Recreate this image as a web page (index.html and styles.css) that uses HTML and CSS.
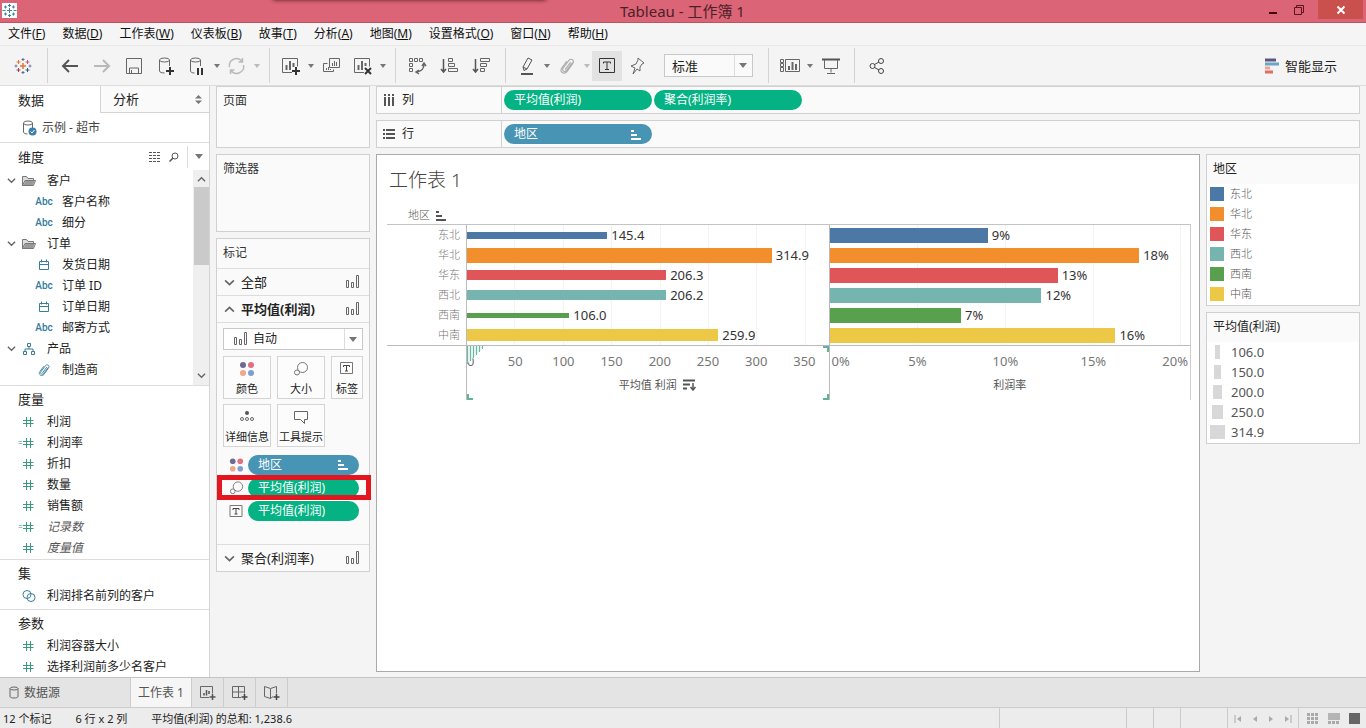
FILE: index.html
```html
<!DOCTYPE html>
<html lang="zh-CN">
<head>
<meta charset="utf-8">
<title>Tableau - 工作簿 1</title>
<link rel="stylesheet" href="styles.css">
</head>
<body>
<svg class="defs" aria-hidden="true">
  <symbol id="i-marks" viewBox="0 0 14 14"><path d="M1.500 5.500h2v7h-2zM6.500 7.500h2v5h-2zM11.500 .5h2v12h-2z" fill="none" stroke="#666"/></symbol>
  <symbol id="i-down" viewBox="0 0 10 10"><path d="M1 3l4 4 4-4" fill="none" stroke="#666" stroke-width="1.500"/></symbol>
  <symbol id="i-up" viewBox="0 0 10 10"><path d="M1 7l4-4 4 4" fill="none" stroke="#666" stroke-width="1.500"/></symbol>
  <symbol id="i-hash" viewBox="0 0 12 12"><path d="M4.500 1v10M8.500 1v10M1 4.500h10.500M1 7.500h10.500" fill="none" stroke="#3a9a80"/></symbol>
  <symbol id="i-cal" viewBox="0 0 12 12"><path d="M1.500 2.500h9v8h-9zM1.500 5.500h9M3.500 .5v3M8.500 .5v3" fill="none" stroke="#3a7d99"/></symbol>
  <symbol id="i-folder" viewBox="0 0 14 12"><path d="M.5 10.500v-9h4l1.500 2h5.500v2M.5 10.500l2.500-5h10.500l-2 5z" fill="#ddd" stroke="#777"/><path d="M1.500 10l2-4h9l-1.500 4z" fill="#999"/></symbol>
  <symbol id="i-sort" viewBox="0 0 11 11"><path d="M1 2h3M1 6h6M1 10h10" stroke="currentColor" stroke-width="2"/></symbol>
  <symbol id="i-text" viewBox="0 0 14 14"><path d="M.5 1.500h12v11h-12z" fill="none" stroke="#777"/><path d="M3.500 6V4.500h6V6M6.500 4.500v5.500M5 10h3" fill="none" stroke="#444"/></symbol>
  <symbol id="i-size" viewBox="0 0 16 16"><circle cx="9.500" cy="6.500" r="5" fill="none" stroke="#777"/><circle cx="4" cy="11.500" r="2.500" fill="#fafafa" stroke="#777"/></symbol>
  <symbol id="i-color" viewBox="0 0 16 16"><circle cx="4" cy="4" r="3" fill="#6e6a93"/><circle cx="12" cy="4" r="3" fill="#e26f81"/><circle cx="4" cy="12" r="3" fill="#f0a68a"/><circle cx="12" cy="12" r="3" fill="#7f9cd3"/></symbol>
  <symbol id="i-clip" viewBox="0 0 16 16"><path d="M12.500 5.500l-5 6.500c-1.500 2-4.500.2-3-2l5.200-7c1.800-2.200 5.300 0 3.600 2.400L8 13c-2.500 3-7 .3-4.800-3L7.500 4M11 5l-4.500 6" fill="none" stroke="currentColor" stroke-linecap="round"/></symbol>
</svg>

<header class="titlebar">
  <svg class="app" width="15" height="15" viewBox="0 0 15 15"><path fill="#fff" d="M0 0h15v15H0z"/><path d="M7.500 1v3M6 2.500h3M7.500 5v5M5 7.500h5M7.500 11v3M6 12.500h3M3.500 2.500v3M2 4h3M11.500 2.500v3M10 4h3M3.500 9.500v3M2 11h3M11.500 9.500v3M10 11h3M.5 7.500h3M11.500 7.500h3" stroke="#3c83a8"/></svg>
  <i class="shade"></i>
  <h1>Tableau - 工作簿 1</h1>
  <div class="winbtns">
    <button aria-label="最小化"><svg width="10" height="10"><path d="M1 8h8" stroke="#400" stroke-width="2"/></svg></button>
    <button aria-label="还原"><svg width="12" height="12"><path d="M3.500 3V1.500h7v7H9M1.500 3.500h7v7h-7z" fill="none" stroke="#5a1520"/></svg></button>
    <button class="close" aria-label="关闭"><svg width="10" height="10"><path d="M1.500 1.500l7 7M8.500 1.500l-7 7" stroke="#fff" stroke-width="2"/></svg></button>
  </div>
</header>

<nav class="menu">
  <button>文件(<u>F</u>)</button><button>数据(<u>D</u>)</button><button>工作表(<u>W</u>)</button><button>仪表板(<u>B</u>)</button><button>故事(<u>T</u>)</button><button>分析(<u>A</u>)</button><button>地图(<u>M</u>)</button><button>设置格式(<u>O</u>)</button><button>窗口(<u>N</u>)</button><button>帮助(<u>H</u>)</button>
</nav>

<div class="toolbar">
  <div class="group first">
    <button class="tb" aria-label="开始"><svg width="18" height="18" viewBox="0 0 18 18"><path d="M9 6v6M6 9h6" stroke="#e8762d" stroke-width="1.500"/><path d="M4.500 3v4M2.500 5h4" stroke="#e8762d"/><path d="M13.500 3v4M11.500 5h4" stroke="#c75b6d"/><path d="M4.500 11v4M2.500 13h4" stroke="#b23a50"/><path d="M13.500 11v4M11.500 13h4" stroke="#2e5d8a"/><path d="M9 1v3M7.500 2.500h3M9 14v3M7.500 15.500h3" stroke="#4a6fa0"/><path d="M2 7.500v3M.5 9h3M16 7.500v3M14.500 9h3" stroke="#7379a8"/></svg></button>
  </div>
  <div class="group">
    <button class="tb" aria-label="撤消"><svg width="20" height="20"><path d="M18 10H3M9 4l-6 6 6 6" fill="none" stroke="#555" stroke-width="2"/></svg></button>
    <button class="tb" aria-label="重做"><svg width="20" height="20"><path d="M2 10h15M11 4l6 6-6 6" fill="none" stroke="#b8b8b8" stroke-width="2"/></svg></button>
    <button class="tb" aria-label="保存"><svg width="20" height="20"><path d="M2.500 2.500h15v15h-15zM5.500 17v-5h9v5M7.500 14v3" fill="none" stroke="#666"/></svg></button>
    <button class="tb" aria-label="新建数据源"><svg width="20" height="20"><ellipse cx="8.500" cy="4" rx="5" ry="2" fill="none" stroke="#666"/><path d="M3.500 4v11c0 1 2 2 5 2M13.500 4v6" fill="none" stroke="#666"/><path d="M14 11v8M10 15h8" stroke="#333" stroke-width="2"/></svg></button>
    <button class="tb pair" aria-label="暂停更新"><svg width="20" height="20"><ellipse cx="8.500" cy="4" rx="5" ry="2" fill="none" stroke="#666"/><path d="M3.500 4v11c0 1 1.500 2 4 2M13.500 4v6" fill="none" stroke="#666"/><path d="M11 12v7M15 12v7" stroke="#333" stroke-width="2"/></svg></button><i class="caret"></i>
    <button class="tb pair" aria-label="刷新"><svg width="20" height="20"><path d="M2.500 11A7 7 0 0 1 15 5.500M16.500 9A7 7 0 0 1 4 14.500M15.500 2v4h-4M3.500 18v-4h4" fill="none" stroke="#bbb" stroke-width="1.500"/></svg></button><i class="caret dim"></i>
  </div>
  <div class="group">
    <button class="tb pair" aria-label="新建工作表"><svg width="20" height="20"><path d="M11 16.500H1.500v-14h15v8" fill="none" stroke="#666"/><path d="M5.500 14V9M9 14V5M12.500 11V7" stroke="#666" stroke-width="2"/><path d="M15 11v8M11 15h8" stroke="#333" stroke-width="2"/></svg></button><i class="caret"></i>
    <button class="tb" aria-label="复制"><svg width="20" height="20"><path d="M7.500 2.500h10v9h-10zM5.500 7.500h-4v8h10v-2" fill="none" stroke="#666"/><path d="M10.500 10V7M12.500 10V5M14.500 10V6M4.500 14v-2M6.500 14v-3M8.500 14v-1" stroke="#666"/></svg></button>
    <button class="tb pair" aria-label="清除"><svg width="20" height="20"><path d="M11 16.500H1.500v-14h15v8" fill="none" stroke="#666"/><path d="M5.500 14V9M9 14V5M12.500 10V7" stroke="#666" stroke-width="2"/><path d="M12 12l6 6M18 12l-6 6" stroke="#333" stroke-width="2"/></svg></button><i class="caret"></i>
  </div>
  <div class="group">
    <button class="tb" aria-label="交换行和列"><svg width="20" height="20"><path d="M1.500 2.500h3v3h-3zM6.500 2.500h3v3h-3zM11.500 2.500h3v3h-3zM1.500 7.500h3v3h-3zM1.500 12.500h3v3h-3z" fill="none" stroke="#666"/><path d="M16 8c0 5-2 7-7 8M14 10l2-3 2 3M11 14l-3 2 3 2" fill="none" stroke="#666" stroke-width="1.500"/></svg></button>
    <button class="tb" aria-label="升序"><svg width="20" height="20"><path d="M3.500 3v13M1 13l2.500 3 2.500-3" fill="none" stroke="#555" stroke-width="1.500"/><path d="M8.500 2.500h4v3h-4zM8.500 7.500h6v3h-6zM8.500 12.500h9v3h-9z" fill="none" stroke="#666"/></svg></button>
    <button class="tb" aria-label="降序"><svg width="20" height="20"><path d="M3.500 3v13M1 13l2.500 3 2.500-3" fill="none" stroke="#555" stroke-width="1.500"/><path d="M8.500 2.500h9v3h-9zM8.500 7.500h6v3h-6zM8.500 12.500h4v3h-4z" fill="none" stroke="#666"/></svg></button>
  </div>
  <div class="group">
    <button class="tb pair" aria-label="突出显示"><svg width="20" height="20"><path d="M6 11l5-9 4 2-5 9-3 1.500zM6 11l4 2" fill="none" stroke="#555"/><path d="M4 18h12" stroke="#555" stroke-width="2"/></svg></button><i class="caret"></i>
    <button class="tb pair clip" aria-label="组"><svg width="18" height="18"><use href="#i-clip"/></svg></button><i class="caret dim"></i>
    <button class="tb pair on" aria-label="显示标记标签"><svg width="20" height="20"><path d="M2.500 2.500h15v14h-15z" fill="none" stroke="#333"/><path d="M6.500 7.500V6h7v1.500M10 6v7M8 13.500h4" fill="none" stroke="#333"/></svg></button>
    <button class="tb pair" aria-label="固定"><svg width="20" height="20"><path d="M11 2l6 5-2 1-2 3v4l-3-2-4 5 2-6-4-2 5-2 2-4z" fill="none" stroke="#666"/></svg></button>
    <label class="sel fit"><select aria-label="适合"><option>标准</option></select></label>
  </div>
  <div class="group">
    <button class="tb pair" aria-label="显示卡"><svg width="22" height="20"><path d="M1.500 3.500h3v3h-3zM1.500 7.500h3v3h-3zM1.500 11.500h3v4h-3zM6.500 3.500h14v12h-14z" fill="none" stroke="#666"/><path d="M10 14v-4M13.500 14V6M17 14V8" stroke="#666" stroke-width="2"/></svg></button><i class="caret"></i>
    <button class="tb" aria-label="演示"><svg width="20" height="20"><path d="M1 3.500h18" stroke="#555" stroke-width="2"/><path d="M3.500 4v8.500h13V4M10 12.500v4M6 17.500h8" fill="none" stroke="#666"/></svg></button>
  </div>
  <div class="group last"><button class="tb" aria-label="共享"><svg width="20" height="20"><g fill="none" stroke="#444"><circle cx="5.500" cy="10" r="2.500"/><circle cx="14" cy="5" r="2.500"/><circle cx="14" cy="15" r="2.500"/><path d="M7.500 8.500L12 6M7.500 11.500L12 14"/></g></svg></button></div>
  <button class="showme"><svg width="14" height="16"><path d="M0 2h11" stroke="#5f5680" stroke-width="3"/><path d="M0 6h14" stroke="#6aa5c4" stroke-width="3"/><path d="M0 10h5" stroke="#f0a590" stroke-width="3"/><path d="M0 14h8" stroke="#dc6f62" stroke-width="3"/></svg>智能显示</button>
</div>

<main>
  <aside class="data">
    <div class="tabs"><button class="act">数据</button><button>分析<svg width="7" height="9"><path d="M3.500 0L7 3.500H0zM3.500 9L7 5.500H0z" fill="#777"/></svg></button></div>
    <div class="source"><svg width="15" height="16"><ellipse cx="6" cy="3" rx="4.500" ry="2" fill="none" stroke="#666"/><path d="M1.500 3v9c0 1 1.500 2 4 2M10.500 3v5" fill="none" stroke="#666"/><circle cx="10.500" cy="11.500" r="4" fill="#3d7fa8"/><path d="M8.500 11.500l1.500 1.500 2.500-3" fill="none" stroke="#fff"/></svg>示例 - 超市</div>
    <section class="dims">
      <h2>维度
        <span class="tools"><button aria-label="列表"><svg width="12" height="10"><path d="M0 .5h12M0 3.500h12M0 6.500h12M0 9.500h12" stroke="#555" stroke-dasharray="3 1"/></svg></button><button aria-label="查找"><svg width="10" height="10"><circle cx="6" cy="4" r="3" fill="none" stroke="#555"/><path d="M4 6L.5 9.500" stroke="#555" stroke-width="1.500"/></svg></button><button class="more" aria-label="更多"><i class="caret"></i></button></span>
      </h2>
      <div class="scroller">
        <ul class="tree">
          <li class="f"><svg width="9" height="9"><use href="#i-down"/></svg><svg width="14" height="12"><use href="#i-folder"/></svg>客户</li>
          <li><b>Abc</b>客户名称</li>
          <li><b>Abc</b>细分</li>
          <li class="f"><svg width="9" height="9"><use href="#i-down"/></svg><svg width="14" height="12"><use href="#i-folder"/></svg>订单</li>
          <li><b><svg width="12" height="12"><use href="#i-cal"/></svg></b>发货日期</li>
          <li><b>Abc</b>订单 ID</li>
          <li><b><svg width="12" height="12"><use href="#i-cal"/></svg></b>订单日期</li>
          <li><b>Abc</b>邮寄方式</li>
          <li class="f"><svg width="9" height="9"><use href="#i-down"/></svg><svg width="14" height="12"><path d="M5.500 .5h3v3h-3zM1.500 8.500h3v3h-3zM9.500 8.500h3v3h-3zM7 4v2M3 8V6h8v2" fill="none" stroke="#3a7d99"/></svg>产品</li>
          <li><b><svg width="14" height="14"><use href="#i-clip"/></svg></b>制造商</li>
        </ul>
        <div class="bar-y"><svg width="9" height="9"><use href="#i-up"/></svg><i></i><svg width="9" height="9"><use href="#i-down"/></svg></div>
      </div>
    </section>
    <section class="measures">
      <h2>度量</h2>
      <ul class="tree flat">
        <li><svg width="12" height="12"><use href="#i-hash"/></svg>利润</li>
        <li class="calc"><svg width="12" height="12"><use href="#i-hash"/></svg>利润率</li>
        <li><svg width="12" height="12"><use href="#i-hash"/></svg>折扣</li>
        <li><svg width="12" height="12"><use href="#i-hash"/></svg>数量</li>
        <li><svg width="12" height="12"><use href="#i-hash"/></svg>销售额</li>
        <li class="calc"><svg width="12" height="12"><use href="#i-hash"/></svg><em>记录数</em></li>
        <li><svg width="12" height="12"><use href="#i-hash"/></svg><em>度量值</em></li>
      </ul>
    </section>
    <section class="sets">
      <h2>集</h2>
      <ul class="tree flat"><li><svg width="14" height="14"><g fill="none" stroke="#3a7d99"><circle cx="5" cy="5.500" r="4"/><circle cx="9" cy="8.500" r="4"/></g></svg>利润排名前列的客户</li></ul>
    </section>
    <section>
      <h2>参数</h2>
      <ul class="tree flat">
        <li><svg width="12" height="12"><use href="#i-hash"/></svg>利润容器大小</li>
        <li><svg width="12" height="12"><use href="#i-hash"/></svg>选择利润前多少名客户</li>
      </ul>
    </section>
  </aside>

  <div class="cards">
    <section class="card pages"><h3>页面</h3></section>
    <section class="card filters"><h3>筛选器</h3></section>
    <section class="card marks">
      <h3>标记</h3>
      <button class="acc"><svg width="11" height="11"><use href="#i-down"/></svg>全部<svg class="r" width="14" height="14"><use href="#i-marks"/></svg></button>
      <button class="acc open"><svg width="11" height="11"><use href="#i-up"/></svg>平均值(利润)<svg class="r" width="14" height="14"><use href="#i-marks"/></svg></button>
      <div class="body">
        <label class="sel mark"><svg width="14" height="14"><use href="#i-marks"/></svg><select aria-label="标记类型"><option>自动</option></select></label>
        <div class="props">
          <button><svg width="16" height="16"><use href="#i-color"/></svg>颜色</button>
          <button><svg width="16" height="16"><use href="#i-size"/></svg>大小</button>
          <button><svg width="14" height="14"><use href="#i-text"/></svg>标签</button>
          <button><svg width="16" height="16"><circle cx="8" cy="4" r="2" fill="#555"/><g fill="none" stroke="#666"><circle cx="3" cy="10" r="1.500"/><circle cx="8" cy="10" r="1.500"/><circle cx="13" cy="10" r="1.500"/></g></svg>详细信息</button>
          <button><svg width="16" height="16"><path d="M1.500 2.500h13v8h-3v4l-4-4h-6z" fill="none" stroke="#666"/></svg>工具提示</button>
        </div>
        <ul class="encs">
          <li><svg width="16" height="16"><use href="#i-color"/></svg><span class="pill dim">地区<svg width="11" height="11"><use href="#i-sort"/></svg></span></li>
          <li class="hl"><svg width="16" height="16"><use href="#i-size"/></svg><span class="pill">平均值(利润)</span></li>
          <li><svg width="14" height="14"><use href="#i-text"/></svg><span class="pill">平均值(利润)</span></li>
        </ul>
      </div>
      <button class="acc"><svg width="11" height="11"><use href="#i-down"/></svg>聚合(利润率)<svg class="r" width="14" height="14"><use href="#i-marks"/></svg></button>
    </section>
  </div>

  <div class="work">
    <div class="shelf"><div class="name"><svg width="12" height="14"><path d="M2 1v2M6 1v2M10 1v2M2 4v9M6 4v9M10 4v9" stroke="#555" stroke-width="2"/></svg>列</div><span class="pill">平均值(利润)</span><span class="pill">聚合(利润率)</span></div>
    <div class="shelf"><div class="name"><svg width="12" height="12"><path d="M0 2h2M0 6h2M0 10h2M3 2h9M3 6h9M3 10h9" stroke="#555" stroke-width="2"/></svg>行</div><span class="pill dim">地区<svg width="11" height="11"><use href="#i-sort"/></svg></span></div>
    <div class="split">
      <section class="sheet">
        <h2>工作表 1</h2>
        <div class="chart">
          <div class="fieldname">地区 <svg width="11" height="11"><use href="#i-sort"/></svg></div>
          <div class="rows"><span>东北</span><span>华北</span><span>华东</span><span>西北</span><span>西南</span><span>中南</span></div>
          <div class="pane p1">
            <div><i class="c1" style="width:38.8%;height:7px"></i>145.4</div>
            <div><i class="c2" style="width:84.3%;height:15px"></i>314.9</div>
            <div><i class="c3" style="width:55.1%;height:10px"></i>206.3</div>
            <div><i class="c4" style="width:55.1%;height:10px"></i>206.2</div>
            <div><i class="c5" style="width:28.3%;height:5px"></i>106.0</div>
            <div><i class="c6" style="width:69.5%;height:12px"></i>259.9</div>
          </div>
          <div class="pane p2">
            <div><i class="c1" style="width:43.9%"></i>9%</div>
            <div><i class="c2" style="width:85.9%"></i>18%</div>
            <div><i class="c3" style="width:63.3%"></i>13%</div>
            <div><i class="c4" style="width:58.8%"></i>12%</div>
            <div><i class="c5" style="width:36.5%"></i>7%</div>
            <div><i class="c6" style="width:79.3%"></i>16%</div>
          </div>
          <div class="axis a1">
            <i class="cr tr"></i><i class="cr bl"></i><i class="cr br"></i>
            <div class="ticks"><span>0</span><span>50</span><span>100</span><span>150</span><span>200</span><span>250</span><span>300</span><span>350</span></div>
            <svg class="hatch" width="18" height="18"><path d="M0 0h18L0 18z" fill="#e3f3ee"/><path d="M.5 0v18M3.500 0v15M6.500 0v12M9.500 0v9M12.500 0v6M15.500 0v3" stroke="#6fb8a4"/></svg>
            <p>平均值 利润<svg width="13" height="12"><path d="M0 1.500h12M0 5.500h7M0 9.500h4" stroke="#555" stroke-width="2"/><path d="M10 4v6M7.500 8l2.500 3 2.500-3" fill="none" stroke="#555" stroke-width="1.500"/></svg></p>
          </div>
          <div class="axis a2">
            <div class="ticks"><span>0%</span><span>5%</span><span>10%</span><span>15%</span><span>20%</span></div>
            <p>利润率</p>
          </div>
        </div>
      </section>
      <aside class="legends">
        <section class="legend"><h3>地区</h3><ul><li><i class="c1"></i>东北</li><li><i class="c2"></i>华北</li><li><i class="c3"></i>华东</li><li><i class="c4"></i>西北</li><li><i class="c5"></i>西南</li><li><i class="c6"></i>中南</li></ul></section>
        <section class="legend sizes"><h3>平均值(利润)</h3><ul><li><b><i style="width:5px"></i></b>106.0</li><li><b><i style="width:7px"></i></b>150.0</li><li><b><i style="width:9px"></i></b>200.0</li><li><b><i style="width:11px"></i></b>250.0</li><li><b><i style="width:15px"></i></b>314.9</li></ul></section>
      </aside>
    </div>
  </div>
</main>

<nav class="sheets">
  <button class="ds"><svg width="10" height="13"><ellipse cx="5" cy="2.500" rx="4" ry="1.500" fill="none" stroke="#666"/><path d="M1 2.500v8c0 2 8 2 8 0v-8" fill="none" stroke="#666"/></svg>数据源</button>
  <button class="act">工作表 1</button>
  <button class="add" aria-label="新建工作表"><svg width="16" height="16"><path d="M9 12.500H.5v-11h12v7" fill="none" stroke="#666"/><path d="M4 10.500V8M6.500 10.500V5M9 9V6M12.500 9v6M9.500 12h6" stroke="#555" stroke-width="1.500"/></svg></button>
  <button class="add" aria-label="新建仪表板"><svg width="16" height="16"><path d="M9 12.500H.5v-11h12v7M6.500 1.500v11M.5 7h12" fill="none" stroke="#666"/><path d="M12.500 9v6M9.500 12h6" stroke="#444" stroke-width="1.500"/></svg></button>
  <button class="add" aria-label="新建故事"><svg width="16" height="16"><path d="M9 11.500l-2.500 2v-10l-6-2v10l6 2M6.500 3.500l6-2v7" fill="none" stroke="#666"/><path d="M12.500 9v6M9.500 12h6" stroke="#444" stroke-width="1.500"/></svg></button>
</nav>
<footer>
  <span>12 个标记</span><span>6 行 x 2 列</span><span>平均值(利润) 的总和: 1,238.6</span>
  <div class="cells"><i class="w1"></i><i class="w2"></i><i class="w2"></i><i class="w3"></i>
    <div class="nav">
      <button aria-label="第一个"><svg width="8" height="8"><path d="M1 0v8" stroke="#aaa"/><path d="M7 1v6L3 4z" fill="#aaa"/></svg></button><button aria-label="上一个"><svg width="8" height="8"><path d="M6 1v6L2 4z" fill="#aaa"/></svg></button><button aria-label="下一个"><svg width="8" height="8"><path d="M2 1v6l4-3z" fill="#aaa"/></svg></button><button aria-label="最后一个"><svg width="8" height="8"><path d="M7 0v8" stroke="#aaa"/><path d="M1 1v6l4-3z" fill="#aaa"/></svg></button>
    </div>
    <div class="views">
      <button aria-label="工作表排序程序"><svg width="12" height="11"><path d="M0 1.500h12M0 5.500h12M0 9.500h12" stroke="#aaa" stroke-width="3" stroke-dasharray="3 1"/></svg></button><button aria-label="胶片"><svg width="12" height="11"><path d="M0 0h12v7H0z" fill="#b5b5b5"/><path d="M0 9.500h12" stroke="#aaa" stroke-width="3" stroke-dasharray="3 1"/></svg></button><button aria-label="选项卡"><svg width="11" height="11"><path d="M0 0h11v11H0z" fill="#666"/></svg></button>
    </div>
  </div>
</footer>
</body>
</html>
```
FILE: styles.css
```css
* { box-sizing: border-box; }
body {
  margin: 0;
  min-height: 100vh;
  display: flex;
  flex-direction: column;
  background: #f4f4f4;
  color: #222;
  font: 12px/20px "Noto Sans", "Noto Sans CJK SC", sans-serif;
}
button, select { font: inherit; color: inherit; border: 0; padding: 0; margin: 0; background: none; }
h1, h2, h3, p, ul { margin: 0; padding: 0; font-weight: 400; list-style: none; }
i { font-style: normal; }
svg { display: block; flex: none; }
.defs { position: absolute; width: 0; height: 0; }

.c1 { background: #4b78a5; }
.c2 { background: #f28f2c; }
.c3 { background: #e05658; }
.c4 { background: #76b5af; }
.c5 { background: #58a04e; }
.c6 { background: #ecc846; }

/* title bar */
.titlebar { position: relative; display: flex; height: 23px; background: #db6576; border-bottom: 1px solid #b85666; overflow: hidden; }
.app { margin: 3px 0 0 2px; }
.shade { position: absolute; left: 20%; width: 20%; top: -4px; height: 4px; box-shadow: 0 0 4px #54101c; }
.titlebar h1 { flex: 1; padding-left: 88px; text-align: center; font-size: 15px; line-height: 22px; color: #4b2028; }
.winbtns { display: flex; height: 19px; margin-right: 3px; }
.winbtns button { width: 26px; display: flex; align-items: center; justify-content: center; }
.winbtns .close { width: 45px; }

.menu { display: flex; gap: 17px; padding-left: 8px; height: 23px; border-bottom: 1px solid #e9e9e9; background: #f5f5f5; }
.menu button { line-height: 22px; color: #111; white-space: nowrap; }

/* toolbar */
.toolbar { display: flex; align-items: center; height: 40px; border-bottom: 1px solid #ddd; }
.group { display: flex; align-items: center; height: 35px; padding: 0 7px 0 6px; border-right: 1px solid #d4d4d4; }
.group.first { padding: 0 8px 0 7px; }
.group.last { border: 0; }
.tb { width: 32px; height: 30px; display: flex; align-items: center; justify-content: center; }
.tb.pair { width: 30px; }
.tb.on { background: #e2e2e2; }
.tb.clip { color: #aaa; }
.caret { width: 10px; display: flex; justify-content: center; }
.caret::before { content: ""; border: 3px solid transparent; border-top: 4px solid #777; border-bottom: 0; }
.caret.dim::before { border-top-color: #bbb; }
.tools .caret::before { border-width: 5px 4px 0; }
.sel { position: relative; display: flex; align-items: center; height: 23px; border: 1px solid #c8c8c8; background: #fafafa; }
.sel select { flex: 1; height: 100%; padding-left: 7px; appearance: none; outline: 0; }
.sel::after { content: ""; position: absolute; right: 5px; top: 8px; border: 4px solid transparent; border-top: 5px solid #777; border-bottom: 0; pointer-events: none; }
.sel::before { content: ""; position: absolute; right: 17px; top: 0; bottom: 0; border-left: 1px solid #ddd; }
.fit { width: 89px; margin: 0 8px 0 12px; font-size: 13px; }
.showme { display: flex; align-items: center; gap: 6px; margin-left: auto; padding-right: 29px; font-size: 13px; }

main { flex: 1; display: flex; gap: 6px; padding-right: 6px; border-bottom: 1px solid #c4c4c4; }

/* data pane */
.data { width: 210px; flex: none; background: #fff; border-right: 1px solid #d4d4d4; white-space: nowrap; }
.tabs { display: flex; height: 27px; }
.tabs button { width: 109px; display: flex; align-items: center; justify-content: space-between; padding: 0 7px 0 12px; font-size: 13px; background: #fafafa; border: solid #d4d4d4; border-width: 0 0 1px 1px; }
.tabs .act { width: 100px; padding-left: 18px; background: #fff; border: 0; }
.source { display: flex; align-items: center; gap: 5px; height: 30px; padding-left: 22px; border-bottom: 1px solid #ddd; color: #444; }
.data section { border-top: 1px solid #ddd; }
.data .dims { border: 0; }
.data h2 { display: flex; align-items: center; height: 25px; padding-left: 18px; font-size: 13px; }
.data .dims h2 { height: 27px; }
.tools { display: flex; align-items: center; gap: 8px; margin-left: auto; }
.tools .more { height: 22px; padding: 0 5px 0 6px; border-left: 1px solid #ddd; }
.scroller { display: flex; height: 215px; justify-content: space-between; }
.tree li { display: flex; align-items: center; height: 21px; padding-left: 34px; }
.tree .f { padding-left: 7px; gap: 6px; }
.tree .f svg + svg { margin-right: 5px; }
.tree b { width: 20px; margin-right: 8px; display: flex; justify-content: center; font: 500 10px/20px Roboto, sans-serif; color: #33799c; }
.flat li { padding-left: 22px; gap: 12px; }
.flat li svg { margin-right: 1px; }
.flat .calc { padding-left: 18px; gap: 0; }
.flat .calc::before { content: "="; width: 4px; font-size: 8px; color: #3a9a80; }
.flat .calc svg { margin-right: 13px; }
.flat em { color: #555; }
.measures { padding-bottom: 1px; }
.sets li { gap: 10px; }
.sets { padding-bottom: 3px; }
.bar-y { width: 16px; display: flex; flex-direction: column; align-items: center; background: #efefef; padding: 5px 0; gap: 3px; }
.bar-y i { width: 15px; height: 78px; background: #cacaca; margin-bottom: auto; }

/* cards */
.cards { width: 154px; flex: none; display: flex; flex-direction: column; gap: 6px; }
.card { border: 1px solid #d0d0d0; background: #fafafa; }
.card h3 { padding: 4px 6px; font-size: 12px; color: #333; }
.pages { height: 62px; }
.filters { height: 78px; }
.marks h3 { height: 29px; }
.acc { width: 100%; height: 27px; display: flex; align-items: center; gap: 6px; padding: 0 10px 0 7px; border-top: 1px solid #ddd; font-size: 13px; }
.acc.open { font-weight: 700; }
.acc .r { margin-left: auto; }
.body { border-top: 1px solid #ddd; padding: 5px 6px 20px; height: 222px; }
.mark { height: 22px; padding-left: 9px; background: #fff; }
.mark select { padding-left: 6px; }
.props { display: grid; grid-template-columns: 48px 48px 32px; gap: 5px 6px; margin-top: 6px; }
.props button { height: 43px; display: flex; flex-direction: column; align-items: center; justify-content: space-between; padding-top: 4px; border: 1px solid #d4d4d4; line-height: 18px; font-size: 11px; white-space: nowrap; background: #fcfcfc; }
.encs { padding: 6px 4px 0 6px; }
.encs li { position: relative; display: flex; align-items: center; gap: 4px; height: 23px; }
.encs li > svg { width: 15px; }
.pill { flex: 1; display: flex; align-items: center; justify-content: space-between; height: 20px; padding: 0 11px 0 10px; border-radius: 10px; background: #04b283; color: #fff; line-height: 20px; }
.pill.dim { background: #4894b4; }
.encs .hl::after { content: ""; position: absolute; left: -12px; right: -12px; top: -1px; bottom: -1px; border: 5px solid #e3151f; }

/* shelves */
.work { flex: 1; min-width: 0; display: flex; flex-direction: column; gap: 6px; }
.shelf { display: flex; align-items: center; gap: 2px; height: 28px; border: 1px solid #d0d0d0; background: #fafafa; }
.shelf .name { width: 125px; height: 100%; display: flex; align-items: center; gap: 7px; padding-left: 6px; border-right: 1px solid #d0d0d0; }
.shelf .pill { flex: none; width: 148px; }

/* view */
.split { flex: 1; display: flex; gap: 6px; padding-bottom: 5px; }
.sheet { flex: 1; min-width: 0; background: #fff; border: 1px solid #aaa; padding: 11px 8px 0 10px; color: #555; font-weight: 300; }
.sheet h2 { padding-left: 2px; font-size: 19px; line-height: 28px; font-weight: 300; color: #444; }
.chart { display: grid; grid-template-columns: 79px minmax(0, 1fr) minmax(0, 1fr); margin-top: 12px; font-size: 11px; }
.fieldname { grid-column: 1 / -1; display: flex; align-items: center; gap: 5px; height: 19px; padding-left: 21px; border-bottom: 1px solid #c4c4c4; }
.rows span { display: block; height: 20px; text-align: right; padding-right: 6px; color: #777; }
.rows, .pane { border-bottom: 1px solid #bbb; }
.pane { border-left: 1px solid #bbb; font-size: 13px; font-weight: 400; color: #333; }
.pane div { display: flex; align-items: center; gap: 4px; height: 20px; }
.pane i { height: 15px; }
.p1 { background: repeating-linear-gradient(to right, transparent 0 calc(13.37% - 1px), #f3f3f3 calc(13.37% - 1px) 13.37%); }
.p2 { border-right: 1px solid #ccc; background: repeating-linear-gradient(to right, transparent 0 calc(24.4% - 1px), #f3f3f3 calc(24.4% - 1px) 24.4%); }
.axis { position: relative; height: 54px; padding-top: 5px; border-left: 1px solid #bbb; }
.a1 { grid-column: 2; }
.a2 { border-right: 1px solid #ccc; }
.ticks { display: flex; font: 400 13px/20px "Noto Sans", sans-serif; color: #777; white-space: nowrap; }
.ticks span { text-align: center; }
.a1 .ticks span { width: 13.37%; }
.a1 .ticks span:first-child { width: 6.68%; text-align: left; }
.a2 .ticks span { width: 24.4%; }
.a2 .ticks span:first-child { width: 12.2%; text-align: left; padding-left: 2px; }
.a2 .ticks span:last-child { width: 14.6%; text-align: right; padding-right: 2px; }
.axis p { display: flex; align-items: center; justify-content: center; gap: 6px; margin-top: 4px; white-space: nowrap; }
.a1 p { padding-left: 19px; }
.hatch { position: absolute; left: 0; top: 0; }
.cr { position: absolute; width: 6px; height: 6px; border: 0 solid #62b39c; }
.tr { right: 0; top: 0; border-width: 2px 2px 0 0; }
.bl { left: 0; bottom: 0; border-width: 0 0 2px 2px; }
.br { right: 0; bottom: 0; border-width: 0 2px 2px 0; }

.legends { width: 154px; flex: none; display: flex; flex-direction: column; gap: 6px; }
.legend { background: #fff; border: 1px solid #d0d0d0; }
.legend h3 { height: 29px; padding: 4px 6px; font-size: 12px; background: #fafafa; }
.legend ul { font-size: 11px; color: #555; font-weight: 300; padding: 0 3px 1px; }
.legend li { display: flex; align-items: center; gap: 6px; height: 20px; }
.legend li > i { width: 14px; height: 14px; }
.sizes ul { font-size: 13px; font-weight: 400; }
.sizes b { width: 15px; display: flex; justify-content: center; }
.sizes b i { height: 14px; background: #d8d8d8; }

/* bottom bars */
.sheets { display: flex; height: 30px; background: #e4e4e4; border-bottom: 1px solid #ccc; }
.sheets button { display: flex; align-items: center; justify-content: center; border-right: 1px solid #ccc; color: #555; white-space: nowrap; }
.sheets .ds { width: 131px; justify-content: flex-start; gap: 5px; padding-left: 9px; }
.sheets .act { width: 61px; background: #f6f6f6; }
.sheets .add { width: 32px; }
footer { display: flex; gap: 24px; height: 21px; padding-left: 3px; background: #ececec; font-size: 11px; line-height: 21px; white-space: nowrap; }
.cells { display: flex; margin-left: auto; }
.cells > * { border-left: 1px solid #ccc; }
.w1 { width: 127px; }
.w2 { width: 27px; }
.w3 { width: 47px; }
.nav { display: flex; width: 71px; justify-content: space-between; padding: 0 6px; }
.views { display: flex; width: 68px; justify-content: space-between; padding: 0 6px 0 8px; }
.winbtns .close { margin-left: 6px; background: #c9504c; }
```
